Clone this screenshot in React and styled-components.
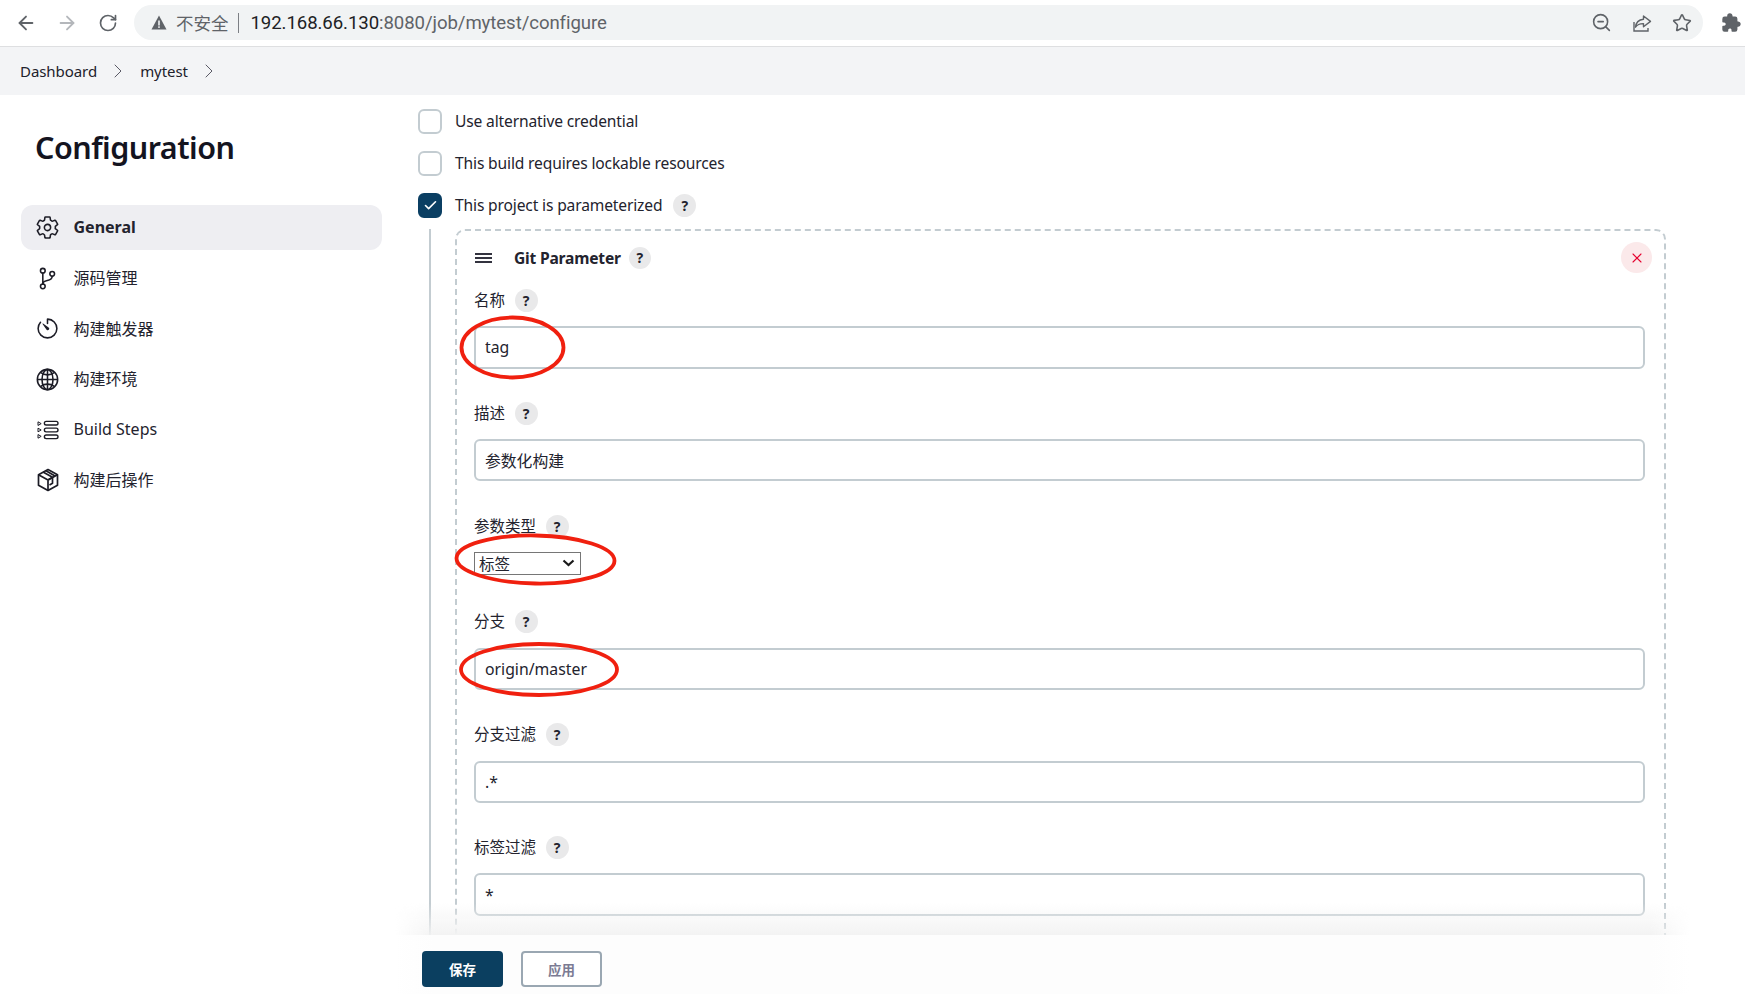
import React from "react";
import styled, { createGlobalStyle } from "styled-components";
import { IoSettingsOutline, IoGitBranchOutline, IoTimerOutline, IoGlobeOutline, IoExtensionPuzzle } from "react-icons/io5";
import { ArrowLeft, ArrowRight, RotateCw, Star, Check, X, ChevronRight, ZoomOut } from "lucide-react";

const FONT = `"Noto Sans", "Noto Sans CJK SC", sans-serif`;

const Global = createGlobalStyle`
  html, body { margin: 0; padding: 0; background: #fff; }
  * { box-sizing: border-box; }
  body { font-family: ${FONT}; color: #14141f; }
`;

const Page = styled.div`
  position: relative;
  width: 1745px;
  height: 994px;
  overflow: hidden;
  display: flex;
  flex-direction: column;
  background: #fff;
`;

const Toolbar = styled.header`
  height: 47px;
  flex: none;
  display: flex;
  align-items: center;
  padding: 0 0 1px 15px;
  border-bottom: 1px solid #dedfe1;
  background: #fff;
`;
const NavIcons = styled.div`
  display: flex;
  gap: 19px;
  width: 119px;
  color: #5f6368;
`;
const NavBtn = styled.span`
  display: flex;
  width: 22px;
  height: 22px;
  align-items: center;
  justify-content: center;
  color: ${(p) => (p.$off ? "#b4b7bb" : "#5f6368")};
`;
const Omnibox = styled.div`
  width: 1569px;
  height: 35px;
  border-radius: 18px;
  background: #f1f3f4;
  display: flex;
  align-items: center;
  padding: 0 11px 0 17px;
`;
const Security = styled.span`
  display: flex;
  align-items: center;
  font-size: 17.5px;
  color: #5f6368;
  gap: 9px;
`;
const Sep = styled.span`
  width: 1px;
  height: 20px;
  background: #7c7f84;
  margin: 0 12px 0 9px;
`;
const Url = styled.span`
  font-family: Roboto, "Noto Sans", sans-serif;
  font-size: 18.6px;
  color: #5f6368;
  flex: 1;
  letter-spacing: -0.08px;
`;
const UrlHost = styled.span`
  color: #202124;
`;
const OmniIcons = styled.div`
  display: flex;
  gap: 20px;
  color: #5f6368;
  align-items: center;
`;
const ExtIcon = styled.span`
  display: flex;
  margin-left: 18px;
  color: #5f6368;
`;

const Breadcrumbs = styled.nav`
  height: 48px;
  flex: none;
  background: #f3f4f6;
  display: flex;
  align-items: center;
  padding: 0 0 0 20px;
  font-size: 15px;
  letter-spacing: -0.06px;
  color: #21212b;
`;
const Crumb = styled.span`
  display: inline-block;
  padding-bottom: 1px;
`;
const CrumbSep = styled.span`
  display: flex;
  color: #5a5a66;
  margin: 0 ${(p) => p.$after}px 0 9px;
`;

const Body = styled.div`
  flex: 1;
  min-height: 0;
  display: flex;
`;

const Sidebar = styled.aside`
  width: 395px;
  flex: none;
  padding: 32px 13px 0 21px;
`;
const Heading = styled.h1`
  margin: 0 0 38px 14px;
  font-size: 30.5px;
  line-height: 40px;
  font-weight: 600;
  letter-spacing: -0.5px;
  color: #14141f;
`;
const SideList = styled.div`
  display: flex;
  flex-direction: column;
  gap: 5.5px;
`;
const SideItem = styled.div`
  height: 45px;
  border-radius: 12px;
  display: flex;
  align-items: center;
  padding: 0 0 2px 14px;
  gap: 13.5px;
  font-size: 16px;
  font-weight: ${(p) => (p.$active ? 700 : 400)};
  background: ${(p) => (p.$active ? "#eeeef2" : "transparent")};
  color: #23232e;
`;
const SideIcon = styled.span`
  display: flex;
  width: 25px;
  height: 25px;
  margin-bottom: -2px;
  align-items: center;
  justify-content: center;
  color: #1c1c26;
`;

const Main = styled.main`
  flex: 1;
  min-width: 0;
  display: flex;
  flex-direction: column;
`;
const Scroll = styled.div`
  flex: 1;
  min-height: 0;
  overflow: hidden;
  padding: 14px 79px 0 23px;
`;
const CheckRow = styled.label`
  display: flex;
  align-items: center;
  height: 25px;
  margin-bottom: 17px;
  font-size: 15.6px;
  letter-spacing: -0.15px;
  color: #23232e;
`;
const RaisedText = styled.span`
  display: block;
  padding-bottom: 2px;
`;
const Box = styled.span`
  width: 24px;
  height: 25px;
  flex: none;
  border-radius: 6px;
  margin-right: 13px;
  border: 2px solid ${(p) => (p.$on ? "#0b3f63" : "#c3ccd1")};
  background: ${(p) => (p.$on ? "#0b3f63" : "#fff")};
  color: #fff;
  display: flex;
  align-items: center;
  justify-content: center;
`;
const Help = styled.span`
  width: ${(p) => p.$size || 23}px;
  height: ${(p) => p.$size || 23}px;
  flex: none;
  border-radius: 50%;
  background: #e9e9ea;
  display: inline-flex;
  align-items: center;
  justify-content: center;
  font-size: 14px;
  font-weight: 700;
  letter-spacing: 0;
  color: #23232e;
  margin-left: ${(p) => p.$gap || 9.5}px;
`;
const Nested = styled.div`
  margin: -6px 0 0 11px;
  padding: 0 0 0 24px;
  border-left: 2px solid #c3ccd1;
  height: 800px;
`;
const Card = styled.section`
  border: 2px dashed #c3ccd1;
  border-radius: 10px;
  height: 900px;
  padding: 11px 19px 0 17px;
`;
const CardHead = styled.div`
  height: 31px;
  display: flex;
  align-items: center;
  margin: 0 -7px 15.9px 0;
`;
const Grip = styled.span`
  width: 17px;
  height: 10px;
  margin: 0 22px 0 1px;
  flex: none;
  display: flex;
  flex-direction: column;
  justify-content: space-between;
  &::before,
  &::after {
    content: "";
    display: block;
    height: 2px;
    background: #33333f;
  }
  background: linear-gradient(#33333f, #33333f) center / 100% 2px no-repeat;
`;
const CardTitle = styled.span`
  font-size: 15.6px;
  font-weight: 700;
  letter-spacing: -0.2px;
  color: #23232e;
`;
const Close = styled.span`
  margin-left: auto;
  width: 31px;
  height: 31px;
  border-radius: 50%;
  background: #fbe9ea;
  color: #e6002e;
  display: flex;
  align-items: center;
  justify-content: center;
`;
const Field = styled.div`
  margin-bottom: ${(p) => p.$after ?? 33.2}px;
`;
const Label = styled.div`
  display: flex;
  align-items: center;
  height: 23px;
  margin-bottom: ${(p) => p.$after ?? 14.2}px;
  font-size: 15.5px;
  color: #23232e;
`;
const Input = styled.input`
  display: block;
  width: 100%;
  height: 42.5px;
  padding: 0 9px;
  border: 2px solid #c3ccd1;
  border-radius: 6px;
  background: #fff;
  font-family: ${FONT};
  font-size: 15.8px;
  color: #23232e;
  outline: none;
`;
const Select = styled.div`
  width: 107px;
  height: 23px;
  border: 1px solid #767676;
  display: flex;
  align-items: center;
  justify-content: space-between;
  padding: 0 5px 0 4px;
  font-size: 15.5px;
  color: #23232e;
  background: #fff;
`;

const Footer = styled.footer`
  height: 59px;
  flex: none;
  position: relative;
  z-index: 1;
  margin: 0 55px 0 0;
  background: linear-gradient(90deg, #fff, #fdfdfd 3%, #fdfdfd 97%, #fff);
  display: flex;
  align-items: flex-start;
  padding: 16px 0 0 27px;
  gap: 18px;
  &::before {
    content: "";
    position: absolute;
    left: 0;
    right: 0;
    top: -32px;
    height: 32px;
    background: linear-gradient(to top, #f3f3f3, rgba(243, 243, 243, 0));
    -webkit-mask-image: linear-gradient(90deg, transparent, #000 3%, #000 97%, transparent);
    mask-image: linear-gradient(90deg, transparent, #000 3%, #000 97%, transparent);
  }
`;
const Primary = styled.button`
  width: 81px;
  height: 36px;
  border: none;
  border-radius: 4px;
  background: #0b3f60;
  color: #fff;
  font-family: ${FONT};
  font-size: 13.5px;
  font-weight: 700;
`;
const Secondary = styled.button`
  width: 81px;
  height: 36px;
  border: 2px solid #9aa7b2;
  border-radius: 4px;
  background: #fff;
  color: #7b7b93;
  font-family: ${FONT};
  font-size: 13.5px;
  font-weight: 700;
`;
const Marks = styled.svg`
  position: absolute;
  left: 0;
  top: 0;
  pointer-events: none;
  z-index: 5;
`;

const ShareIcon = () => (
  <svg width="20" height="20" viewBox="0 0 20 20" fill="none" stroke="currentColor" strokeWidth="1.4">
    <path d="M2 9v9h14v-3" />
    <path d="M11.5 3l7 5.4-7 5.4v-3.2c-3.5-.1-6.2 1-8 3.6.4-4.4 3.3-7.6 8-8V3z" strokeLinejoin="round" />
  </svg>
);
const Warn = () => (
  <svg width="16" height="15" viewBox="0 0 16 15"><path d="M8 0.5L15.5 14.5H0.5z" fill="#5f6368" /><rect x="7.2" y="5.5" width="1.6" height="5" fill="#f1f3f4" /><rect x="7.2" y="11.3" width="1.6" height="1.6" fill="#f1f3f4" /></svg>
);
const StepsIcon = () => (
  <svg width="24" height="20" viewBox="0 0 24 22" fill="none" stroke="currentColor" strokeWidth="1.5">
    <path d="M1 2l3.5 2L1 6zM1 9l3.5 2L1 13zM1 16l3.5 2L1 20z" strokeLinejoin="round" strokeWidth="1.1" />
    <rect x="8" y="1.5" width="15" height="4" rx="2" />
    <rect x="8" y="9" width="15" height="4" rx="2" />
    <rect x="8" y="16.5" width="15" height="4" rx="2" />
  </svg>
);
const PackageIcon = () => (
  <svg width="24" height="24" viewBox="0 0 24 24" fill="none" stroke="currentColor" strokeWidth="1.7" strokeLinejoin="round">
    <path d="M12 1.5l9.5 5.3v10.4L12 22.5 2.5 17.2V6.8z" />
    <path d="M2.5 6.8L12 12l9.5-5.2M12 12v10.5" />
    <path d="M7 4l9.5 5.3v6l-3 1.6M16.5 9.3l-4.5 2.7M10 2.7l9 5.2" />
  </svg>
);

const fields = [
  { label: "名称", value: "tag" },
  { label: "描述", value: "参数化构建" },
];
const fieldsAfter = [
  { label: "分支", value: "origin/master" },
  { label: "分支过滤", value: ".*" },
  { label: "标签过滤", value: "*" },
];

const nav = [
  { label: "General", icon: <IoSettingsOutline size={25} />, active: true },
  { label: "源码管理", icon: <IoGitBranchOutline size={25} /> },
  { label: "构建触发器", icon: <IoTimerOutline size={25} /> },
  { label: "构建环境", icon: <IoGlobeOutline size={25} /> },
  { label: "Build Steps", icon: <StepsIcon /> },
  { label: "构建后操作", icon: <PackageIcon /> },
];

const Param = ({ label, value }) => (
  <Field>
    <Label>
      <RaisedText>{label}</RaisedText>
      <Help>?</Help>
    </Label>
    <Input readOnly value={value} />
  </Field>
);

export default function App() {
  return (
    <Page>
      <Global />
      <Toolbar>
        <NavIcons>
          <NavBtn><ArrowLeft size={22} strokeWidth={2} /></NavBtn>
          <NavBtn $off><ArrowRight size={22} strokeWidth={2} /></NavBtn>
          <NavBtn><RotateCw size={20} strokeWidth={2} /></NavBtn>
        </NavIcons>
        <Omnibox>
          <Security><Warn />不安全</Security>
          <Sep />
          <Url><UrlHost>192.168.66.130</UrlHost>:8080/job/mytest/configure</Url>
          <OmniIcons>
            <ZoomOut size={21} strokeWidth={1.8} />
            <ShareIcon />
            <Star size={20} strokeWidth={1.9} />
          </OmniIcons>
        </Omnibox>
        <ExtIcon><IoExtensionPuzzle size={21} /></ExtIcon>
      </Toolbar>
      <Breadcrumbs>
        <Crumb>Dashboard</Crumb>
        <CrumbSep $after={10}><ChevronRight size={24} strokeWidth={1} /></CrumbSep>
        <Crumb>mytest</Crumb>
        <CrumbSep $after={0}><ChevronRight size={24} strokeWidth={1} /></CrumbSep>
      </Breadcrumbs>
      <Body>
        <Sidebar>
          <Heading>Configuration</Heading>
          <SideList>
            {nav.map((n) => (
              <SideItem key={n.label} $active={n.active}>
                <SideIcon>{n.icon}</SideIcon>
                {n.label}
              </SideItem>
            ))}
          </SideList>
        </Sidebar>
        <Main>
          <Scroll>
            <CheckRow><Box /><RaisedText>Use alternative credential</RaisedText></CheckRow>
            <CheckRow><Box /><RaisedText>This build requires lockable resources</RaisedText></CheckRow>
            <CheckRow>
              <Box $on><Check size={15} strokeWidth={2.6} /></Box>
              <RaisedText>This project is parameterized</RaisedText>
              <Help $gap={11}>?</Help>
            </CheckRow>
            <Nested>
              <Card>
                <CardHead>
                  <Grip />
                  <CardTitle>Git Parameter</CardTitle>
                  <Help $size={22} $gap={8}>?</Help>
                  <Close><X size={16} strokeWidth={1.6} /></Close>
                </CardHead>
                {fields.map((f) => <Param key={f.label} {...f} />)}
                <Field $after={35.8}>
                  <Label $after={14}>
                    <RaisedText>参数类型</RaisedText>
                    <Help>?</Help>
                  </Label>
                  <Select>
                    标签
                    <svg width="13" height="8" viewBox="0 0 13 8" fill="none" stroke="#1a1a1a" strokeWidth="2.2"><path d="M1.5 1.5L6.5 6l5-4.5" /></svg>
                  </Select>
                </Field>
                {fieldsAfter.map((f) => <Param key={f.label} {...f} />)}
              </Card>
            </Nested>
          </Scroll>
          <Footer>
            <Primary>保存</Primary>
            <Secondary>应用</Secondary>
          </Footer>
        </Main>
      </Body>
      <Marks width="1745" height="994" viewBox="0 0 1745 994" fill="none" stroke="#f0200f" strokeWidth="3.8">
        <ellipse cx="512.5" cy="347.5" rx="51" ry="30" />
        <ellipse cx="535.5" cy="559.5" rx="79" ry="24" transform="rotate(1 535.5 559.5)" />
        <ellipse cx="539" cy="669.5" rx="78" ry="25.5" />
      </Marks>
    </Page>
  );
}
